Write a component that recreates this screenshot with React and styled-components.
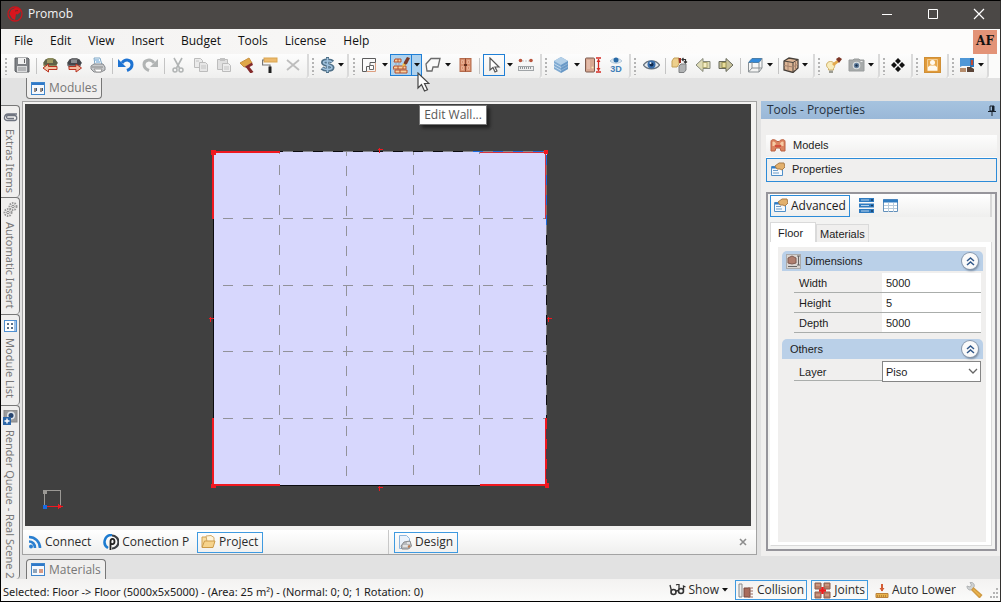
import React from 'react';
import styled, { createGlobalStyle, css } from 'styled-components';

const ui = '"Open Sans", "Noto Sans", sans-serif';
const tabFont = '"Noto Sans", "Open Sans", sans-serif';
const panelFont = '"Liberation Sans", Arial, sans-serif';

const Global = createGlobalStyle`
  * { box-sizing: border-box; }
  body { margin: 0; background: #e2e2e2; font: 12px/16px ${ui}; color: #1c1c1c; }
  button, input, select { font: inherit; color: inherit; padding: 0; margin: 0; border: 0; background: none; border-radius: 0; }
  svg { display: block; flex: none; }
`;

/* ---------- window frame ---------- */
const Window = styled.div`
  display: flex;
  flex-direction: column;
  height: 100vh;
  border: 1px solid #000;
  border-right-color: #33312f;
  overflow: hidden;
`;
const TitleBar = styled.header`
  display: flex;
  flex: none;
  align-items: center;
  height: 28px;
  padding: 0 0 2px 6px;
  gap: 5px;
  background: #4b4846;
  color: #f4f4f4;
`;
const WindowButtons = styled.div`
  display: flex;
  margin: 0 -2px 0 auto;
`;
const WindowButton = styled.button`
  display: grid;
  place-items: center;
  width: 46px;
  height: 24px;
`;
const MenuBar = styled.nav`
  display: flex;
  flex: none;
  align-items: center;
  height: 25px;
  gap: 17px;
  padding-left: 13px;
  background: linear-gradient(90deg, #f3f2f1, #fdfcfb 70%);
`;
const MenuItem = styled.button`
  padding-bottom: 2px;
  color: #111;
`;
const UserBadge = styled.span`
  align-self: stretch;
  width: 24px;
  margin: 1px 3px 0 auto;
  background: #e39377;
  color: #111;
  font: bold 12px/22px "DejaVu Serif", serif;
  text-align: center;
`;

/* ---------- toolbar ---------- */
const ToolStrip = styled.div`
  display: flex;
  flex: none;
  height: 24px;
  background: #fbfbfa;
`;
const ToolGroup = styled.div`
  display: flex;
  flex: none;
  align-items: stretch;
  width: ${p => p.$w}px;
  background: linear-gradient(#fdfdfd, #efefee);
  border-right: 2px solid #dadada;
  border-radius: 0 0 3px 0;
`;
const Grip = styled.span`
  flex: none;
  width: ${p => p.$w}px;
  margin: 4px 0 3px;
  background: repeating-linear-gradient(#b4b4b4 0 2px, transparent 2px 4px) center / 2px 100% no-repeat;
`;
const Divider = styled.span`
  flex: none;
  width: ${p => p.$w}px;
  margin: 4px 0;
  background: linear-gradient(#c4c4c4, #c4c4c4) center / 1px 100% no-repeat;
`;
const ToolButton = styled.button`
  display: grid;
  place-items: center;
  flex: none;
  width: ${p => p.$w || 23}px;
  height: 22px;
  ${p => p.$on && css`border: 1px solid #1f7fd6;`}
  ${p => p.$hot && css`background: #aed2ee;`}
`;
const SplitButton = styled.span`
  position: relative;
  display: flex;
  flex: none;
  ${ToolButton} + ${ToolButton} { border-left: 0; }
`;
const Tooltip = styled.span`
  position: absolute;
  left: 29px;
  top: 51px;
  z-index: 3;
  width: 68px;
  height: 20px;
  border: 1px solid #777;
  background: #fff;
  box-shadow: 3px 3px 3px #222;
  color: #575757;
  line-height: 17px;
  text-align: center;
  white-space: nowrap;
`;
const Pointer = styled.span`
  position: absolute;
  left: 27px;
  top: 18px;
  z-index: 4;
`;

/* ---------- workspace ---------- */
const Workspace = styled.main`
  display: grid;
  grid-template: minmax(0, 1fr) / 21px minmax(0, 1fr) 243px;
  flex: 1;
  min-height: 0;
`;
const SideTabs = styled.div`
  display: flex;
  flex-direction: column;
  width: 19px;
  padding-top: 27px;
`;
const SideTab = styled.button`
  display: flex;
  align-items: center;
  flex: none;
  gap: 5px;
  width: 19px;
  height: ${p => p.$h}px;
  padding-top: 4px;
  writing-mode: vertical-rl;
  border: 1px solid #777;
  border-left: 0;
  border-bottom: 0;
  border-radius: 0 4px 4px 0;
  background: #f0efee;
  color: #777;
  font: 11px/16px ${tabFont};
  white-space: nowrap;
  overflow: hidden;
`;
const Center = styled.div`
  display: flex;
  flex-direction: column;
  min-width: 0;
  min-height: 0;
`;
const TabStrip = styled.div`
  display: flex;
  flex: none;
  align-items: ${p => (p.$bottom ? 'flex-end' : 'flex-start')};
  height: ${p => (p.$bottom ? 24 : 23)}px;
  padding-left: 4px;
`;
const DockTab = styled.button`
  display: flex;
  align-items: center;
  gap: 4px;
  height: ${p => (p.$up ? 20 : 21)}px;
  padding: 0 4px;
  border: 1px solid #777;
  background: #f0efee;
  color: #777;
  ${p => (p.$up
    ? css`border-bottom: 0; border-radius: 4px 4px 0 0;`
    : css`border-top: 0; border-radius: 0 0 4px 4px;`)}
`;
const Document = styled.section`
  display: flex;
  flex-direction: column;
  flex: 1;
  min-height: 0;
  border: 1px solid #a3a3a3;
  background: #f3f2f1;
`;
const Viewport = styled.div`
  flex: 1;
  min-height: 0;
  margin: 2px 5px 0 2px;
  background: #404040;
  svg { width: 100%; height: 100%; }
`;
const ViewBar = styled.div`
  display: flex;
  flex: none;
  height: 28px;
  padding-top: 4px;
`;
const ViewGroup = styled.div`
  display: flex;
  align-items: center;
  gap: 3px;
  padding: 0 4px 0 1px;
  background: linear-gradient(#fff, #efefee);
  border-right: 1px solid #c8c8c8;
  ${p => (p.$w ? css`flex: none; width: ${p.$w}px;` : css`flex: 1; border: 0; padding: 0 5px;`)}
`;
const ViewButton = styled.button`
  display: flex;
  align-items: center;
  gap: 3px;
  height: 21px;
  padding: 0 4px 0 3px;
  border: 1px solid ${p => (p.$on ? '#3f9ae0' : 'transparent')};
  white-space: nowrap;
  color: #2b2b2b;
`;
const CloseButton = styled.button`
  width: 16px;
  height: 16px;
  margin-left: auto;
  display: grid;
  place-items: center;
`;

/* ---------- properties panel ---------- */
const Side = styled.aside`
  display: flex;
  flex-direction: column;
  margin: 23px 0 23px 4px;
  background: #f0efee;
  font: 11px/16px ${panelFont};
`;
const SideTitle = styled.h2`
  display: flex;
  align-items: center;
  justify-content: space-between;
  height: 18px;
  margin: 0 0 15px;
  padding: 0 4px 0 6px;
  background: linear-gradient(#a6c3df, #9ab8d8);
  color: #26323f;
  font: 12px/16px ${ui};
`;
const NavRow = styled.button`
  display: flex;
  align-items: center;
  gap: 7px;
  height: 24px;
  margin: 0 3px 0 5px;
  padding: 0 3px 2px;
  border: 1px solid ${p => (p.$on ? '#2c8bd8' : 'transparent')};
  background: ${p => (p.$on ? 'none' : 'linear-gradient(#fdfdfd, #f0efee)')};
`;
const Inspector = styled.div`
  display: flex;
  flex-direction: column;
  flex: 1;
  margin: 10px 3px 5px 5px;
  padding: 0 3px 3px 2px;
  border: 2px solid #96959b;
  background: #f3f3f2;
`;
const InspectorBar = styled.div`
  display: flex;
  align-items: center;
  gap: 7px;
  height: 23px;
  padding-right: 4px;
  background: linear-gradient(#fff, #efefee);
  border-right: 2px solid #d8d8d8;
`;
const AdvancedButton = styled.button`
  display: flex;
  align-items: center;
  gap: 3px;
  width: 80px;
  height: 22px;
  padding-left: 2px;
  border: 1px solid #2c8bd8;
  font: 12px/16px ${ui};
`;
const PageTabs = styled.div`
  display: flex;
  align-items: flex-end;
  height: 25px;
`;
const PageTab = styled.button`
  height: ${p => (p.$on ? 20 : 18)}px;
  padding: 0 ${p => (p.$on ? 12 : 3)}px 0 ${p => (p.$on ? 7 : 3)}px;
  border: 1px solid #dadada;
  border-bottom: 0;
  background: ${p => (p.$on ? '#fff' : '#f0efee')};
`;
const Page = styled.div`
  display: flex;
  flex: 1;
  padding: 5px 5px 3px 7px;
  border: 1px solid #dadada;
  border-left-color: #fff;
  border-top: 0;
  background: #fff;
`;
const Sheet = styled.div`
  flex: 1;
  padding: 4px 3px 4px 4px;
  background: #f0efee;
`;
const SectionHead = styled.h3`
  display: flex;
  align-items: center;
  gap: 4px;
  height: 20px;
  margin: 0 0 2px;
  padding: 0 5px 0 ${p => (p.$icon ? 4 : 8)}px;
  border-radius: 5px 5px 0 0;
  background: #bad0e8;
  font: 11px/16px ${panelFont};
`;
const Collapse = styled.button`
  display: grid;
  place-items: center;
  width: 16px;
  height: 16px;
  margin-left: auto;
  border-radius: 8px;
  background: #fafafa;
  box-shadow: 0 0 0 1px #8798ad, 1px 2px 2px #7c8ea3;
`;
const Fields = styled.div`
  margin: 0 2px 6px 12px;
`;
const Field = styled.label`
  display: grid;
  grid-template-columns: 88px minmax(0, 1fr);
  align-items: center;
  height: 20px;
  border-bottom: 1px solid #aaadab;
`;
const FieldName = styled.span`
  padding-left: 5px;
`;
const FieldInput = styled.input`
  width: 100%;
  height: 19px;
  padding-left: 4px;
  background: #fff;
  outline: 0;
`;
const LayerSelect = styled.select`
  width: 100%;
  height: 21px;
  padding: 0 3px;
  appearance: none;
  border: 1px solid #858585;
  background: #fff;
`;
const SelectBox = styled.span`
  position: relative;
  svg { position: absolute; right: 3px; top: 7px; pointer-events: none; }
`;

/* ---------- status bar ---------- */
const StatusBar = styled.footer`
  display: flex;
  flex: none;
  align-items: center;
  height: 22px;
  padding: 0 0 0 2px;
  background: linear-gradient(#f3f2f1, #fbfbfa);
  white-space: nowrap;
`;
const StatusText = styled.span`
  padding-top: 3px;
  font: 11px/16px ${tabFont};
`;
const StatusTools = styled.div`
  display: flex;
  align-items: center;
  margin-left: auto;
  gap: 4px;
`;
const StatusButton = styled.button`
  display: flex;
  align-items: center;
  gap: 3px;
  height: 20px;
  padding: 0 2px;
  border: 1px solid ${p => (p.$on ? '#3f9ae0' : 'transparent')};
  color: #2b2b2b;
`;

/* ---------- icons ---------- */
const S = ({ w = 16, h = 16, children, ...rest }) => (
  <svg width={w} height={h} viewBox={`0 0 ${w} ${h}`} fill="none" aria-hidden="true" {...rest}>{children}</svg>
);
const Caret = () => <S w={6} h={4}><path d="M0 0h6L3 3.5z" fill="#111" /></S>;

const icons = {
  save: <S><path d="M1 1h13l1 1v13H2l-1-1z" fill="#7f8286" stroke="#606367" /><rect x="4" y="1" width="8" height="6" fill="#f1f1f1" /><rect x="3" y="9" width="10" height="6" fill="#dadbdc" /><path d="M4 11h8M4 13h8" stroke="#8b8e91" /><rect x="10" y="2" width="1" height="4" fill="#666" /></S>,
  boxIn: <S><path d="M3 3l3-2h5l3 2 1 5-2 4H4L1 8z" fill="#8c8c5e" /><path d="M1 6l3-4 4 2 5-2 3 4-2 2H3z" fill="#5f6148" /><path d="M5 3h6v3H5z" fill="#a19a62" /><path d="M6.500 7v2.500H15v3H6.500V15L1 11z" fill="#f3c7a8" stroke="#b83220" /></S>,
  boxOut: <S><path d="M3 3l3-2h5l3 2 1 5-2 4H4L1 8z" fill="#707174" /><path d="M1 6l3-4 4 2 5-2 3 4-2 2H3z" fill="#44464b" /><path d="M5 3h6v3H5z" fill="#8b8c90" /><path d="M10 7v2.500H3v3h7V15l5.500-4z" fill="#f3b79c" stroke="#b83220" /></S>,
  print: <S><path d="M4 1h6l2 7H5z" fill="#f5fafd" stroke="#7fa7c6" /><path d="M5 3h4M6 5h4" stroke="#5e9bd0" /><path d="M1 9l3-2h9l2 3v3l-4 2H4l-3-3z" fill="#c9cbcd" stroke="#85888c" /><path d="M4 12h8l-1 3H6z" fill="#fff" stroke="#999" /><path d="M2 10h11" stroke="#888" /></S>,
  undo: <S><path d="M4 6C7 1.500 14 2.500 14 7.500c0 3-2.500 5-5 6" stroke="#1e73d2" strokeWidth="3" /><path d="M0 2v8h8z" fill="#1e73d2" /></S>,
  redo: <S><path d="M12 6C9 1.500 2 2.500 2 7.500c0 3 2.500 5 5 6" stroke="#b1b4b4" strokeWidth="3" /><path d="M16 2v8H8z" fill="#b1b4b4" /></S>,
  cut: <S><path d="M4 1l5.500 10M12 1L6.500 11" stroke="#b1b4b4" strokeWidth="1.600" /><circle cx="5" cy="13" r="2" stroke="#b1b4b4" strokeWidth="1.500" /><circle cx="11" cy="13" r="2" stroke="#b1b4b4" strokeWidth="1.500" /></S>,
  copy: <S><path d="M1.500 1.500h6l2 2v7h-8z" fill="#ebebeb" stroke="#bcbcbc" /><path d="M6.500 5.500h6l2 2v7h-8z" fill="#e6e6e6" stroke="#bcbcbc" /><path d="M8 9h5M8 11h5M3 4h3" stroke="#c4c4c4" /></S>,
  paste: <S><path d="M1.500 2.500h10v10h-10z" fill="#e0e0e0" stroke="#bdbdbd" /><path d="M4 1h5v3H4z" fill="#c2c2c2" /><path d="M6.500 6.500h6l2 2v6h-8z" fill="#ececec" stroke="#bcbcbc" /><path d="M8 10h5M8 12h5" stroke="#c4c4c4" /></S>,
  brush: <S><path d="M1 6l9-5 3 5-8 4z" fill="#e0a748" stroke="#c99344" /><path d="M5.500 10L13 5.500l1 2.500-3.500 2 4 5-3 1.500-4-5.500z" fill="#842a2b" /></S>,
  roller: <S><rect x="2" y="1" width="13" height="4" fill="#ecb96c" stroke="#d9a550" /><path d="M2 3H.5v5H8v2" stroke="#777" strokeWidth="1.200" /><rect x="6.500" y="9.500" width="3" height="6.500" fill="#202020" /></S>,
  del: <S><path d="M2 3l12 10M14 3L2 13" stroke="#bdbdbd" strokeWidth="1.800" /></S>,
  dollar: <S w={17}><path d="M8.500 0v16" stroke="#4f7088" strokeWidth="3" /><path d="M13.500 5C12 3 4 2.500 4 5.500c0 3 9.500 2 9.500 5 0 3-8 3-10.500.5" stroke="#4f7088" strokeWidth="4" /><path d="M13 5C11.500 3.500 4.500 3 4.500 5.500c0 2.500 8.500 2 8.500 5 0 2.500-7.500 2.500-9.500.5M8.500 1v14" stroke="#a0c2de" strokeWidth="1.600" /></S>,
  wall: <S><path d="M1.500 1.500h13v4H9v4H5.500v5h-4z" fill="#fafafa" stroke="#5c5c5c" /><path d="M8.500 8.500h4v4h-4z" fill="#fff" stroke="#6a6a6a" /><path d="M14.500 6v8.500H6" stroke="#dd9f80" /></S>,
  editWall: <S w={17} h={17}><path d="M2 2h6v3H1zM1 9h12v3H0zM2 13h12v3H2z" fill="#f6cf9e" stroke="#b5502f" /><path d="M5 9v3M10 9v3M7 13v3M5 2v3" stroke="#b5502f" /><path d="M11 5l3-5 3 1-3 6-4 2z" fill="#7a3b2a" /><path d="M10 6l3 2-4 2z" fill="#f3bd48" /><path d="M2 7h6" stroke="#8ba5b7" strokeDasharray="2 1" /></S>,
  floor: <S><path d="M6 1.500h9L13 10H8l-1 4H2L1 7z" fill="#fafafa" stroke="#6a6a6a" strokeWidth="1.300" /></S>,
  cabinet: <S><rect x="3" y="1.500" width="11" height="13" fill="#d88f6e" stroke="#b46a4b" /><path d="M8.500 1.500v13" stroke="#8d4a33" /><path d="M4.500 3.500h2v3h-2zM10.500 3.500h2v3h-2zM4.500 9.500h2v3h-2zM10.500 9.500h2v3h-2z" stroke="#e8b094" /><path d="M7 8h3" stroke="#63301f" strokeWidth="2" /></S>,
  arrow: <S><path d="M4 1v12l3-2.500L9 15l2-1-2-4h4z" fill="#fff" stroke="#555" strokeWidth="1.200" /></S>,
  ruler: <S><rect x=".5" y="9.500" width="15" height="4" fill="#eee" stroke="#a0a4a7" /><path d="M2 11h12" stroke="#8f9598" strokeWidth="2" strokeDasharray="1 1" /><path d="M4 4h8" stroke="#c3c8ca" strokeDasharray="2 1" /><circle cx="2.500" cy="3.500" r="1.800" fill="#b9563e" /><circle cx="13" cy="3.500" r="1.800" fill="#b9563e" /></S>,
  layers: <S><path d="M1 4l7-4 7 4v8l-7 4-7-4z" fill="#7faad2" /><path d="M1 4l7-4 7 4-7 4z" fill="#b4d0e8" /><path d="M1 6.500l7 4 7-4M1 9.500l7 4 7-4" stroke="#d0e2f1" strokeWidth=".8" /><path d="M8 8v8l7-4V4z" fill="#4d83b7" opacity=".45" /></S>,
  measure: <S><rect x=".5" y="1" width="9" height="14" rx="1" fill="#d7a892" stroke="#7d5a4e" /><rect x="2" y="3" width="3" height="9" fill="#e3bba9" /><circle cx="7.500" cy="10.500" r="1" fill="#f7e8b2" /><path d="M11 1h5M11 15h5M13.500 2v12" stroke="#d52c24" strokeWidth="1.300" /><path d="M11.500 5l2-3 2 3zM11.500 11l2 3 2-3z" fill="#d52c24" /></S>,
  view3d: <S h={20}><path d="M2 6C5 2.500 11 2.500 14 6 11 9 5 9 2 6z" fill="#d9e6f1" stroke="#b3c8da" /><circle cx="8" cy="5" r="2.500" fill="#2869a5" /><text x="8" y="17" textAnchor="middle" fontFamily="Liberation Sans" fontSize="9" fontWeight="bold" fill="#3f7fb8">3D</text></S>,
  eye: <S w={17}><path d="M.5 8C4 2.500 13 2.500 16.500 8 13 13 4 13 .5 8z" fill="#e4e9ee" stroke="#66717c" strokeWidth="1.300" /><circle cx="8.500" cy="7.500" r="4" fill="#386dab" /><circle cx="8.500" cy="7.500" r="2" fill="#122c4f" /><circle cx="7.500" cy="6" r="1" fill="#e5f0fa" /></S>,
  swap: <S w={17}><path d="M1 4l2-3h5v6l-2 3H1z" fill="#edcf8b" stroke="#c3a058" /><path d="M8 9l2-2h5v6l-2 2.500H8z" fill="#b0b2b3" stroke="#7e8082" /><path d="M7.500 1H10v5H8z" fill="#9b3427" /><path d="M11 2.500h3.500v3M12.500 1L11 2.500 12.500 4M13 4.500l1.500 1.500L16 4.500" stroke="#333" strokeWidth="1.200" /></S>,
  prev: <S><path d="M8 1.500v3h7v7H8v3L1 8z" fill="#dedbb6" stroke="#85887a" /><rect x="8" y="5.500" width="4" height="5" fill="#f5eec4" stroke="#b0a970" /></S>,
  next: <S><path d="M8 1.500v3H1v7h7v3L15 8z" fill="#c7c29b" stroke="#66685b" /><rect x="4" y="5.500" width="4" height="5" fill="#eadf9c" stroke="#9a9252" /></S>,
  wire: <S><path d="M1.500 5.500L5 1.500h10l-3 4z" fill="#3289da" stroke="#4c7fa9" /><path d="M1.500 5.500V15H12l3-4V1.500M12 5.500V15M1.500 15L5 11h10M5 11V5" stroke="#8a9094" /></S>,
  cube: <S><path d="M1 4l5-3 9 1.500V11l-5 4.500L1 13z" fill="#dcb595" stroke="#47403a" strokeWidth="1.300" /><path d="M1 4l9 1.500 5-3M10 5.500v10" stroke="#47403a" /><path d="M5 5v8.500M12.500 4v9M1 8.500l9 1.500 5-3" stroke="#a5826c" /></S>,
  bulb: <S w={17}><path d="M5.500 4.500c4 0 5.500 4.500 3 7v1.500h-5v-1.500C0 9 1.500 4.500 5.500 4.500z" fill="#f8ecbc" stroke="#cfae66" /><path d="M4 13.500h4V16H4z" fill="#9c9c92" /><path d="M7 7l5-4 2 2-5 4z" fill="#e3a94c" /><path d="M11 2l3-2 3 2-3 4z" fill="#7d3727" /></S>,
  camera: <S w={17}><path d="M1 3h4l1-1h5l1 1h4v11H1z" fill="#a8abab" stroke="#999c9c" /><circle cx="8.500" cy="8.500" r="3.800" fill="#dfe2e3" /><circle cx="8.500" cy="8.500" r="2.700" fill="#64809e" /><circle cx="8.500" cy="8.500" r="1.200" fill="#19304d" /><path d="M12.500 4.500h2" stroke="#eee" /></S>,
  diamonds: <S><path d="M8 1l3 3-3 3-3-3zM8 9l3 3-3 3-3-3zM4 5l3 3-3 3-3-3zM12 5l3 3-3 3-3-3z" fill="#111" /></S>,
  user: <S w={17}><rect x=".5" y=".5" width="16" height="15" fill="#e09a3a" stroke="#d08f35" /><path d="M3.500 2.500h10v11h-10z" fill="#e8a94c" stroke="#f3cd92" /><circle cx="8.500" cy="5.500" r="2.500" fill="#fffaf0" /><path d="M4 13.500V10l2-1.500h5l2 1.500v3.500z" fill="#fffaf0" /></S>,
  room: <S><path d="M1 1h10v8H3l-2 1z" fill="#4f97d6" /><path d="M11 1h4v9h-4z" fill="#2c73b5" /><path d="M13 3v5" stroke="#bd4a34" strokeWidth="2" /><path d="M1 11h6v4H1z" fill="#b68d6c" /><path d="M8 10h4l3 2v3H8z" fill="#5a4437" /></S>,
};

const groups = [
  { w: 308, items: ['g9', ['save', 24], 's4', ['boxIn', 24], ['boxOut', 24], ['print', 24], 's4', ['undo', 24], ['redo', 24], 's4', ['cut'], ['copy'], ['paste'], ['brush'], ['roller'], ['del']] },
  { w: 40, items: ['g8', ['dollar', 20], 'a8'] },
  { w: 193, items: ['g9', ['wall', 22], 'a10', 'edit', ['floor', 21], 'a10', ['cabinet'], 's7', ['arrow', 22, true], 'a9', ['ruler', 24]] },
  { w: 89, items: ['g7', ['layers'], 'a9', ['measure'], ['view3d', 24]] },
  { w: 184, items: ['g8', ['eye', 24], 's5', ['swap'], ['prev'], ['next'], 's7', ['wire', 21], 'a10', 's6', ['cube', 20], 'a8'] },
  { w: 65, items: ['g7', ['bulb'], ['camera', 22], 'a8'] },
  { w: 33, items: ['g7', ['diamonds', 22]] },
  { w: 36, items: ['g8', ['user']] },
  { w: 40, items: ['g8', ['room', 20], 'a8'] },
];

function EditWallButton() {
  return (
    <SplitButton>
      <ToolButton $w={22} $on $hot aria-label="Edit Wall">{icons.editWall}</ToolButton>
      <ToolButton $w={10} $on $hot aria-label="Edit Wall options"><Caret /></ToolButton>
      <Tooltip role="tooltip">Edit Wall...</Tooltip>
      <Pointer>
        <S w={13} h={20}><path d="M1 1v15l3.500-3.500L7.500 19l3-1.300-3-6.200H12z" fill="#fff" stroke="#444" strokeWidth="1.200" /></S>
      </Pointer>
    </SplitButton>
  );
}

function ToolItem({ item }) {
  if (item === 'edit') return <EditWallButton />;
  if (typeof item === 'string') {
    const w = Number(item.slice(1));
    if (item[0] === 'g') return <Grip $w={w} />;
    if (item[0] === 's') return <Divider $w={w} />;
    return <ToolButton $w={w} aria-label="More options"><Caret /></ToolButton>;
  }
  const [name, w, on] = item;
  return <ToolButton $w={w} $on={on} aria-label={name}>{icons[name]}</ToolButton>;
}

const AppLogo = () => <S><circle cx="8" cy="8" r="7" stroke="#c8161d" strokeWidth="1.300" /><path d="M4 4l5-2.500 4 1.500.5 3-3 2.500-1.500-.5L8 14l-3-1.500L2.500 8z" fill="#d9151d" /><path d="M8 5l3-.5" stroke="#7c2525" /></S>;
const ModuleIcon = () => <S w={14} h={13}><rect x=".5" y=".5" width="13" height="12" fill="#f5f8fc" stroke="#3f86cc" /><path d="M1 2h12" stroke="#2f78c8" strokeWidth="2" /><path d="M3 6h2v4H3zM9 6h2v4H9z" fill="#9d8e84" /><path d="M5 6h1v3H5zM11 6h1v3h-1z" fill="#3d5675" /></S>;
const PanelIcon = () => <S w={14} h={13}><rect x=".5" y=".5" width="13" height="12" fill="#f5f8fc" stroke="#3f86cc" /><path d="M1 2h12" stroke="#2f78c8" strokeWidth="2" /><path d="M2 6h4v4H2z" fill="#8ea4ba" /><path d="M8 6h4v4H8z" fill="#d79a83" /></S>;
const ClipIcon = () => <S w={15} h={14}><path d="M14 4H5c-4 0-5 6.500-1 6.500h7.500c3 0 3-5 0-5H5c-2 0-2 3 0 3h6" stroke="#6f7480" strokeWidth="1.300" /></S>;
const GearsIcon = () => <S w={15} h={15}><circle cx="10" cy="4.500" r="3.500" stroke="#999" strokeWidth="2" strokeDasharray="1.500 1" /><circle cx="10" cy="4.500" r="1.300" stroke="#858585" /><circle cx="5" cy="10.500" r="3.500" stroke="#999" strokeWidth="2" strokeDasharray="1.500 1" /><circle cx="5" cy="10.500" r="1.300" stroke="#858585" /></S>;
const ListIcon = () => <S w={13} h={14}><rect x=".5" y="1.500" width="12" height="11" fill="#fff" stroke="#4f8fd0" /><path d="M11 2v10" stroke="#9fc2e8" strokeWidth="2" /><path d="M3 4h2v2H3zM3 8h2v2H3zM7 4h2v2H7zM7 8h2v2H7z" fill="#5c7288" /></S>;
const QueueIcon = () => <S w={15} h={15}><rect x="1" y="0" width="13" height="12" fill="#9b9b9b" stroke="#888" /><circle cx="8" cy="5.500" r="4" fill="#dfe5ea" /><circle cx="8" cy="5.500" r="2.500" fill="#28456e" /><rect x="0" y="7" width="8" height="8" fill="#2c66a8" /><path d="M4 8.500v5M1.500 11h5" stroke="#fff" strokeWidth="1.400" /></S>;
const FeedIcon = () => <S w={14} h={14}><circle cx="3" cy="11.500" r="2" fill="#2a7fd0" /><path d="M1 6.500c3.500 0 6 2.500 6 6.500M1 2c6 0 11 4.500 11 11" stroke="#2a7fd0" strokeWidth="2.600" /></S>;
const PLogo = () => <S><path d="M9 1a7 7 0 0 0-4 13" stroke="#1d7bd0" strokeWidth="2.500" /><path d="M9 1.500a6.500 6.500 0 0 1 0 13" stroke="#3b3f44" strokeWidth="2.200" /><path d="M7.500 16V7.500c0-3.500 4-3.500 4 0s-4 3-4 1" stroke="#222" strokeWidth="1.800" /></S>;
const FolderIcon = () => <S w={15} h={14}><path d="M1 12V2h4l1 1h6v3" fill="#f8dda0" stroke="#cfa052" /><path d="M5 1l5-.5 3 2v4H6z" fill="#fff4da" stroke="#d1ab6c" /><path d="M1 12.500L3.500 6H14l-2 6.500z" fill="#f6d38c" stroke="#cb9a48" /></S>;
const DesignIcon = () => <S w={14} h={15}><path d="M1.500.5h7l3 3v10h-10z" fill="#eaf2fb" stroke="#8cb5dd" /><path d="M3 11l3-4 6-1 1.500 5-3 3H4z" fill="#b9bbbd" stroke="#888a8d" /><path d="M5 11h5M9 8h3" stroke="#f0f0f0" strokeWidth="1.500" /><path d="M10 12l2-1" stroke="#bd7b4d" strokeWidth="2" /></S>;
const ModelsIcon = () => <S w={16} h={14}><path d="M1 3.500C1 1 5 1 7 3.500h2C11 1 15 1 15 3.500V13h-4l-1-3H6l-1 3H1z" fill="#dc8460" stroke="#bb6040" /><path d="M2.500 4c1-1.500 3 0 3.500 2L4 8H2.500zM13.500 4c-1-1.500-3 0-3.500 2l2 2h1.500z" fill="#f6cba4" /><path d="M5 8h6" stroke="#cf4034" strokeWidth="1.500" /></S>;
const PropsIcon = () => <S w={15} h={15}><path d="M1.500 4.500h11v9h-11z" fill="#f6f9fd" stroke="#4f8fc8" /><path d="M2 5.500h10" stroke="#2d7bc8" strokeWidth="2" /><path d="M3 8.500h5M3 11h6" stroke="#6c9cc8" /><path d="M5 4l4-3h5l1 4-3 3-2-1H7z" fill="#e3b06c" stroke="#a97d4b" /></S>;
const Collide = () => <S h={15}><path d="M1 1h3v13H1z" fill="#eee" stroke="#888" /><path d="M6 5h6v9H6z" fill="#a96c5c" stroke="#76483e" /><path d="M10 5h5M10 8h5M10 11h5M10 14h5" stroke="#9b6a5e" /></S>;
const JointsIcon = () => <S w={17} h={17}><path d="M1 1h6v6H1zM10 1h6v6h-6zM1 10h6v6H1zM10 10h6v6h-6z" fill="#b87c66" stroke="#8a6052" /><path d="M2 3h4M11 3h4M2 13h4M11 13h4" stroke="#e0b29c" /><path d="M8.500 5v7M5 8.500h7" stroke="#ec1c1c" strokeWidth="2.500" /></S>;
const LowerIcon = () => <S w={14} h={15}><path d="M7 1v7" stroke="#d35c34" strokeWidth="2" /><path d="M4.500 5h5L7 8.500z" fill="#d35c34" /><path d="M1 10.500h12v4H1z" fill="#e7b24c" stroke="#bb823a" /><path d="M2 13h10" stroke="#8f5d22" strokeDasharray="1 1" /></S>;
const Wrench = () => <S w={17}><path d="M1 4l3 1 1.500-2L4 .5C7 0 9 2 8 5L6 7.500C3 9 1 7 1 4z" fill="#cfd2d3" stroke="#b0b3b5" /><path d="M7.500 6l8 7-2 2.500L6 8z" fill="#edb54d" stroke="#cf9a42" strokeWidth="1.500" /></S>;
const Glasses = () => <S w={17} h={12}><path d="M1 1l1.500 6M7 1l3-1v5" stroke="#333" strokeWidth="1.300" /><circle cx="4.500" cy="8" r="2.500" stroke="#333" strokeWidth="1.600" /><circle cx="12" cy="7" r="2.500" stroke="#333" strokeWidth="1.600" /><path d="M7 7l2.500-.5M14.500 6V2l2 1" stroke="#333" strokeWidth="1.300" /></S>;
const Chevrons = () => <S w={9} h={9}><path d="M1 4l3.500-3L8 4M1 8l3.500-3L8 8" stroke="#31588a" strokeWidth="1.500" /></S>;
const DimIcon = () => <S w={15} h={15}><rect x=".5" y=".5" width="14" height="14" fill="#d9d5d2" stroke="#aaa" /><path d="M2 4l4-2 4 2v5l-4 1-4-1z" fill="#b07f6f" stroke="#7f5c52" /><path d="M12.500 2v9M11 2h3M11 11h3M2 12.500h9" stroke="#666" /></S>;
const PinIcon = () => <S w={8} h={11}><path d="M2 1h4v5H2zM0 6.500h8M4 7v4" stroke="#16202b" /><path d="M5 1v5" stroke="#16202b" strokeWidth="2" /></S>;
const CategoriesIcon = () => <S w={15} h={15}><path d="M0 0h15v4H0zM0 5.500h15v4H0zM0 11h15v4H0z" fill="#2f7bc0" /><path d="M2 2h8M2 7.500h8M2 13h8" stroke="#b5d1ea" strokeWidth="1.200" /><path d="M12 2h2M12 7.500h2M12 13h2" stroke="#173e66" strokeWidth="1.500" /></S>;
const TableIcon = () => <S w={15} h={14}><path d="M.5.5h14v12H.5z" fill="#fff" stroke="#6290bb" /><path d="M0 2h15" stroke="#2f7bc0" strokeWidth="3" /><path d="M1 6.500h13M1 9.500h13M5.500 4v9M10.500 4v9" stroke="#b8cbdb" /></S>;

/* ---------- plan view of the floor ---------- */
const Tick = ({ x, y }) => <path d={`M${x - 2} ${y}h5M${x} ${y - 2}v5`} stroke="#f01820" />;
function FloorPlan() {
  return (
    <svg viewBox="25 104 726 422" preserveAspectRatio="xMidYMid meet" fill="none" shapeRendering="crispEdges" role="img" aria-label="Floor plan">
      <rect x="214" y="152" width="333" height="334" fill="#d7d7fd" />
      <g stroke="#92929a" strokeDasharray="10 10">
        <path d="M279.500 165V486M346.500 166V486M413.500 165V486M479.500 165V486" />
        <path d="M279.500 152v2M346.500 152v4M413.500 152v3M479.500 152v2" />
        <path d="M223 218.500H547M223 285.500H547M223 351.500H547M223 418.500H547" />
      </g>
      <path d="M213.500 219V418M280 485.500H480M214 151.500H547M546.500 219V486" stroke="#0c0c10" />
      <path d="M223 151.500H547M546.500 225V486" stroke="#85858d" strokeDasharray="10 10" />
      <path d="M213 152h67M213 152v67M213 418v68M213 485h67M480 485h67M546 418v68" stroke="#f01820" strokeWidth="2" />
      <path d="M480 152.500h67M545.500 152v67" stroke="#d8323e" />
      <path d="M473 151.500h74" stroke="#1a6adf" strokeDasharray="10 10" />
      <path d="M546.500 155v70" stroke="#1a6adf" strokeDasharray="10 10" />
      <path d="M546.500 165v54" stroke="#8a6a66" strokeDasharray="10 10" />
      <path d="M546.500 429v57" stroke="#55353f" strokeDasharray="10 10" />
      <path d="M211 150h5v5h-5zM211 484h5v4h-5zM545 483h4v5h-4zM544 150h4v4h-4z" fill="#f01820" />
      <Tick x={379.5} y={149.5} /><Tick x={210.5} y={318.5} /><Tick x={548.5} y={318.5} /><Tick x={379.5} y={487.5} />
      <path d="M44.500 507V490.500H60.500V507" stroke="#9b9995" />
      <path d="M43 490h4v4h-4z" fill="#9b9995" />
      <path d="M46 506.500H59" stroke="#f01820" /><path d="M58 504l5 2.500-5 2.500z" fill="#f01820" />
      <path d="M43 505h4v4h-4z" fill="#1a6adf" />
    </svg>
  );
}

function Section({ title, icon, children }) {
  return (
    <>
      <SectionHead $icon={!!icon}>
        {icon}{title}
        <Collapse aria-label={`Collapse ${title}`}><Chevrons /></Collapse>
      </SectionHead>
      <Fields>{children}</Fields>
    </>
  );
}

export default function App() {
  return (
    <Window>
      <Global />
      <TitleBar>
        <AppLogo />
        <span>Promob</span>
        <WindowButtons>
          <WindowButton aria-label="Minimize"><S w={12} h={12}><path d="M1 6.500h10" stroke="#fff" /></S></WindowButton>
          <WindowButton aria-label="Maximize"><S w={12} h={12}><path d="M1.500 1.500h9v9h-9z" stroke="#fff" /></S></WindowButton>
          <WindowButton aria-label="Close"><S w={12} h={12}><path d="M1 1l10 10M11 1L1 11" stroke="#fff" strokeWidth="1.200" /></S></WindowButton>
        </WindowButtons>
      </TitleBar>
      <MenuBar>
        {['File', 'Edit', 'View', 'Insert', 'Budget', 'Tools', 'License', 'Help'].map(m => <MenuItem key={m}>{m}</MenuItem>)}
        <UserBadge>AF</UserBadge>
      </MenuBar>
      <ToolStrip>
        {groups.map((g, i) => (
          <ToolGroup key={i} $w={g.w}>
            {g.items.map((item, j) => <ToolItem key={j} item={item} />)}
          </ToolGroup>
        ))}
      </ToolStrip>

      <Workspace>
        <SideTabs>
          <SideTab $h={92}><ClipIcon />Extras Items</SideTab>
          <SideTab $h={117}><GearsIcon />Automatic Insert</SideTab>
          <SideTab $h={91}><ListIcon />Module List</SideTab>
          <SideTab $h={174}><QueueIcon />Render Queue - Real Scene 2</SideTab>
        </SideTabs>

        <Center>
          <TabStrip><DockTab><ModuleIcon />Modules</DockTab></TabStrip>
          <Document>
            <Viewport><FloorPlan /></Viewport>
            <ViewBar>
              <ViewGroup $w={366}>
                <ViewButton><FeedIcon />Connect</ViewButton>
                <ViewButton><PLogo />Conection P</ViewButton>
                <ViewButton $on><FolderIcon />Project</ViewButton>
              </ViewGroup>
              <ViewGroup>
                <ViewButton $on><DesignIcon />Design</ViewButton>
                <CloseButton aria-label="Close view"><S w={8} h={8}><path d="M1 1l6 6M7 1L1 7" stroke="#8d8d8d" strokeWidth="1.600" /></S></CloseButton>
              </ViewGroup>
            </ViewBar>
          </Document>
          <TabStrip $bottom><DockTab $up><PanelIcon />Materials</DockTab></TabStrip>
        </Center>

        <Side>
          <SideTitle>Tools - Properties<PinIcon /></SideTitle>
          <NavRow><ModelsIcon />Models</NavRow>
          <NavRow $on><PropsIcon />Properties</NavRow>
          <Inspector>
            <InspectorBar>
              <AdvancedButton><PropsIcon />Advanced</AdvancedButton>
              <ToolButton $w={18} aria-label="Categories"><CategoriesIcon /></ToolButton>
              <ToolButton $w={16} aria-label="Table"><TableIcon /></ToolButton>
            </InspectorBar>
            <PageTabs>
              <PageTab $on>Floor</PageTab>
              <PageTab>Materials</PageTab>
            </PageTabs>
            <Page>
              <Sheet>
                <Section title="Dimensions" icon={<DimIcon />}>
                  <Field><FieldName>Width</FieldName><FieldInput defaultValue="5000" /></Field>
                  <Field><FieldName>Height</FieldName><FieldInput defaultValue="5" /></Field>
                  <Field><FieldName>Depth</FieldName><FieldInput defaultValue="5000" /></Field>
                </Section>
                <Section title="Others">
                  <Field>
                    <FieldName>Layer</FieldName>
                    <SelectBox>
                      <LayerSelect defaultValue="Piso"><option>Piso</option></LayerSelect>
                      <S w={10} h={7}><path d="M1 1l4 4 4-4" stroke="#666" strokeWidth="1.300" /></S>
                    </SelectBox>
                  </Field>
                </Section>
              </Sheet>
            </Page>
          </Inspector>
        </Side>
      </Workspace>

      <StatusBar>
        <StatusText>Selected: Floor -&gt; Floor (5000x5x5000) - (Area: 25 m²) - (Normal: 0; 0; 1 Rotation: 0)</StatusText>
        <StatusTools>
          <StatusButton><Glasses />Show<Caret /></StatusButton>
          <StatusButton $on><Collide />Collision</StatusButton>
          <StatusButton $on><JointsIcon />Joints</StatusButton>
          <StatusButton><LowerIcon />Auto Lower</StatusButton>
          <StatusButton aria-label="Settings"><Wrench /></StatusButton>
          <S w={10} h={18}><path d="M6 8h3M3 12h6M0 16h9" stroke="#b4b4b4" strokeWidth="2" strokeDasharray="2 1" /></S>
        </StatusTools>
      </StatusBar>
    </Window>
  );
}
